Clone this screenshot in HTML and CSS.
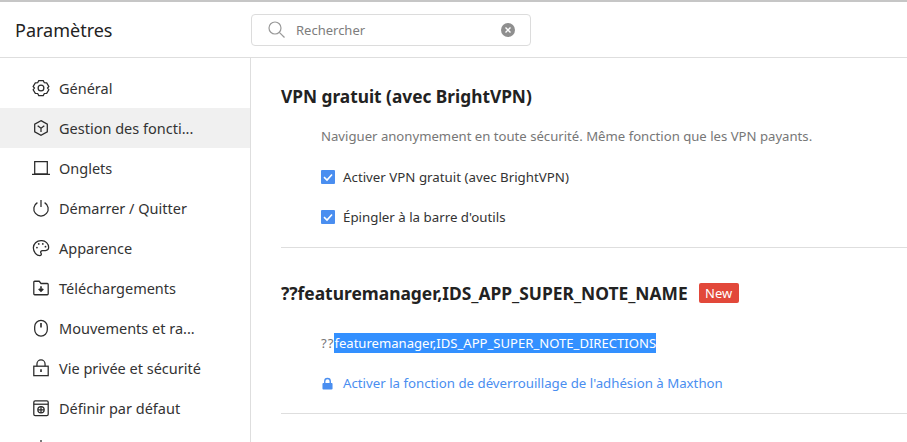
FILE: index.html
```html
<!DOCTYPE html>
<html lang="fr">
<head>
<meta charset="utf-8">
<title>Paramètres</title>
<link rel="stylesheet" href="styles.css">
</head>
<body>
<div class="app">
  <header class="top">
    <h1 class="brand">Paramètres</h1>
    <div class="search">
      <svg class="search-icon" width="18" height="18" viewBox="0 0 18 18"><circle cx="7" cy="7" r="6" fill="none" stroke="#999" stroke-width="1.2"/><path d="M11.300 11.300l5.200 5.200" stroke="#999" stroke-width="1.2" fill="none"/></svg>
      <span class="search-text">Rechercher</span>
      <svg class="search-clear" width="14" height="14" viewBox="0 0 14 14"><circle cx="7" cy="7" r="7" fill="#8f8f8f"/><path d="M4.500 4.500l5 5M9.500 4.500l-5 5" stroke="#fff" stroke-width="1.400"/></svg>
    </div>
  </header>
  <div class="body">
    <nav class="side">
      <a class="item"><svg class="ico" viewBox="0 0 20 20"><path d="M7.500 1.800h5l1.200 2.300 2.600.2 2.400 4-1.400 1.700 1.400 1.900-2.400 4-2.600.2-1.200 2.300h-5l-1.200-2.300-2.600-.2-2.400-4 1.400-1.900-1.400-1.700 2.400-4 2.600-.2z"/><circle cx="10" cy="10" r="3.200"/></svg><span>Général</span></a>
      <a class="item active"><svg class="ico" viewBox="0 0 20 20"><path d="M10 1.800l7 4v8.400l-7 4-7-4V5.800z"/><path d="M6.300 7.500l3.700 2.700 3.700-2.700M10 10.200v4.300"/></svg><span>Gestion des foncti...</span></a>
      <a class="item"><svg class="ico" viewBox="0 0 20 20"><path d="M3 3h14v13.500H3zM0 17h20"/></svg><span>Onglets</span></a>
      <a class="item"><svg class="ico" viewBox="0 0 20 20"><path d="M6 4a8 8 0 1 0 8 0M10 1v8"/></svg><span>Démarrer / Quitter</span></a>
      <a class="item"><svg class="ico" viewBox="0 0 20 20"><path d="M10 1.800c-4.800 0-8.500 3.500-8.500 8 0 4.800 3.700 8.600 7 8.600 2 0 2.200-1.600 1.500-2.600-.9-1.400 0-3 1.700-3h3.300c2.300 0 3.500-1.400 3.500-3.500 0-4.200-3.600-7.500-7.500-7.500z"/><circle class="dot" cx="5.500" cy="9.500" r="1"/><circle class="dot" cx="7.500" cy="5.500" r="1"/><circle class="dot" cx="12" cy="5.500" r="1"/><circle class="dot" cx="15" cy="8.500" r="1"/></svg><span>Apparence</span></a>
      <a class="item"><svg class="ico" viewBox="0 0 20 20"><path d="M2 3.500c0-.6.400-1 1-1h5l2 2.500h7c.6 0 1 .4 1 1v10.500c0 .6-.4 1-1 1H3c-.6 0-1-.4-1-1z"/><path class="thick" d="M10 8v5M7.500 11l2.500 2.500 2.500-2.500"/></svg><span>Téléchargements</span></a>
      <a class="item"><svg class="ico" viewBox="0 0 20 20"><rect x="3" y="1.500" width="14" height="17.500" rx="7"/><path class="thick" d="M10 4.500v5"/></svg><span>Mouvements et ra...</span></a>
      <a class="item"><svg class="ico" viewBox="0 0 20 20"><rect x="2" y="8" width="16" height="10.500"/><path d="M5.500 8V5.500a4.500 4.500 0 0 1 9 0V8"/><path class="thick" d="M10 11.500v3"/></svg><span>Vie privée et sécurité</span></a>
      <a class="item"><svg class="ico" viewBox="0 0 20 20"><rect x="2" y="2" width="16" height="16.500" rx="1.500"/><path d="M2 5.800h16"/><circle cx="10" cy="12" r="3.500"/><path d="M6.500 12h7M10 8.500v7"/></svg><span>Définir par défaut</span></a>
      <a class="item"><svg class="ico" viewBox="0 0 20 20"><path d="M10 1v3"/></svg><span></span></a>
    </nav>
    <main class="main">
      <section class="section">
        <h2 class="title">VPN gratuit (avec BrightVPN)</h2>
        <p class="row desc">Naviguer anonymement en toute sécurité. Même fonction que les VPN payants.</p>
        <label class="row option"><span class="check"><svg width="14" height="14" viewBox="0 0 14 14"><path d="M3 7.200l3 2.800 5-5.500" fill="none" stroke="#fff" stroke-width="1.600"/></svg></span>Activer VPN gratuit (avec BrightVPN)</label>
        <label class="row option"><span class="check"><svg width="14" height="14" viewBox="0 0 14 14"><path d="M3 7.200l3 2.800 5-5.500" fill="none" stroke="#fff" stroke-width="1.600"/></svg></span>Épingler à la barre d'outils</label>
      </section>
      <section class="section">
        <h2 class="title title-new">??featuremanager,IDS_APP_SUPER_NOTE_NAME<span class="badge">New</span></h2>
        <p class="row desc"><span class="marks">??</span><span class="selected">featuremanager,IDS_APP_SUPER_NOTE_DIRECTIONS</span></p>
        <a class="row link"><svg class="lock" width="11" height="13" viewBox="0 0 12 14"><path d="M1.500 6.500h9c.5 0 1 .4 1 1v5c0 .6-.5 1-1 1h-9c-.6 0-1-.4-1-1v-5c0-.6.400-1 1-1z" fill="#4a8ef0"/><path d="M3 7V4.500a3 3 0 0 1 6 0V7" fill="none" stroke="#4a8ef0" stroke-width="1.500"/></svg>Activer la fonction de déverrouillage de l'adhésion à Maxthon</a>
      </section>
    </main>
  </div>
</div>
</body>
</html>
```
FILE: styles.css
```css
* { box-sizing: border-box; }
html, body { margin: 0; height: 100%; overflow: hidden; background: #fff; }
body { font-family: "Noto Sans", "Open Sans", sans-serif; font-size: 14px; color: #333; }
.app { height: 442px; display: flex; flex-direction: column; border-top: 2px solid #c6c6c6; overflow: hidden; }
.top { height: 56px; flex: none; display: flex; align-items: center; border-bottom: 1px solid #dedede; }
.brand { width: 251px; margin: 0; padding-left: 15px; font-size: 18px; font-weight: 400; color: #222; }
.search { width: 280px; height: 32px; display: flex; align-items: center; padding: 0 15px 0 16px; border: 1px solid #dcdcdc; border-radius: 4px; }
.search-text { flex: 1; margin-left: 10px; color: #7d7d7d; font-size: 13px; }
.body { flex: 1; display: flex; min-height: 0; }
.side { width: 251px; flex: none; padding-top: 10px; border-right: 1px solid #dedede; }
.item { height: 40px; display: flex; align-items: center; gap: 9px; padding-left: 32px; font-size: 14.500px; color: #333; }
.item.active { background: #f0f0f0; }
.ico { width: 18px; height: 18px; flex: none; fill: none; stroke: #2b2b2b; stroke-width: 1.400; }
.ico .dot { fill: #2b2b2b; stroke: none; }
.ico .thick { stroke-width: 1.800; }
.main { flex: 1; padding-left: 30px; min-width: 0; }
.section { border-bottom: 1px solid #dedede; padding: 18px 0 11px; }
.section + .section { padding: 25px 0 10px; }
.title { margin: 0; height: 40px; display: flex; align-items: center; font-size: 17.300px; font-weight: 700; color: #222; white-space: nowrap; }
.title-new { margin-bottom: 10px; font-size: 17.400px; }
.badge { margin-left: 11px; width: 40px; height: 20px; line-height: 20px; text-align: center; background: #e2483a; color: #fff; border-radius: 2px; font-size: 13px; font-weight: 400; }
.row { height: 40px; margin: 0; padding-left: 40px; display: flex; align-items: center; color: #333; font-size: 13.300px; white-space: nowrap; }
.option { padding-top: 2px; }
.desc { color: #777; font-size: 13.150px; }
.marks { letter-spacing: 1px; }
.check { width: 14px; height: 14px; margin-right: 8px; background: #4a8ef0; border-radius: 1px; display: flex; }
.selected { height: 20px; line-height: 20px; background: #3390ff; color: #fff; font-size: 13.100px; }
.link { color: #4a8ef0; font-size: 13.250px; }
.lock { margin: 0 10px 0 1px; flex: none; }
```
